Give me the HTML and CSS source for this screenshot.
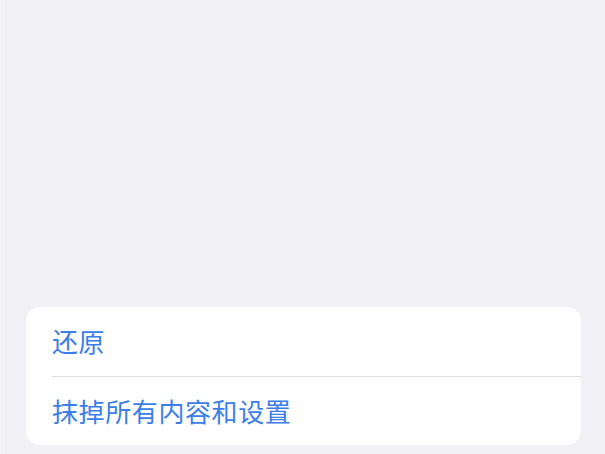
FILE: index.html
```html
<!DOCTYPE html>
<html lang="zh-CN">
<head>
    <meta charset="UTF-8">
    <meta name="viewport" content="width=device-width, initial-scale=1.0">
    <title>还原</title>
    <link rel="stylesheet" href="styles.css">
</head>
<body>

    <div class="screen">
        <div class="group">
            <div class="row">还原</div>
            <div class="row">抹掉所有内容和设置</div>
        </div>
    </div>

</body>
</html>
```

FILE: styles.css
```css
html, body {
    margin: 0;
    height: 100%;
}
body {
    font-family: "Noto Sans CJK SC", "Noto Sans", sans-serif;
    background-color: #f0f0f5;
}
.screen {
    height: 454px;
    box-sizing: border-box;
    border-left: 1px solid #f6f6f8;
    display: flex;
    flex-direction: column;
    justify-content: flex-end;
    padding: 0 24px 9px 25px;
}
.group {
    background-color: #fff;
    border-radius: 14px;
    padding-left: 26px;
}
.row {
    height: 69px;
    display: flex;
    align-items: center;
    font-size: 26px;
    letter-spacing: 0.6px;
    color: #3b7ee9;
    box-sizing: border-box;
    padding-bottom: 2px;
}
.row + .row {
    border-top: 1px solid #dedee2;
}
```
